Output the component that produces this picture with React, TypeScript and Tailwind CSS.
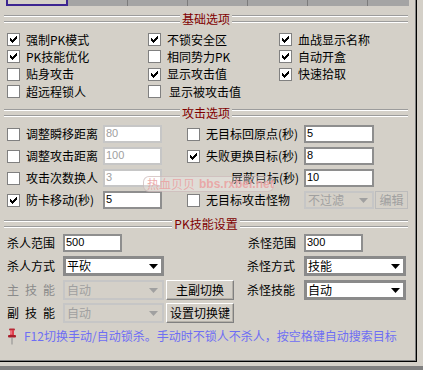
import React from "react";

function Check({ checked }: { checked?: boolean }) {
  return (
    <span className="flex h-[13px] w-[13px] shrink-0 border border-[#808080] bg-white">
      {checked && (
        <svg width="11" height="11" viewBox="0 0 11 11" shapeRendering="crispEdges" className="block">
          <rect x="2" y="4" width="1" height="3" fill="#000" />
          <rect x="3" y="5" width="1" height="3" fill="#000" />
          <rect x="4" y="6" width="1" height="3" fill="#000" />
          <rect x="5" y="5" width="1" height="3" fill="#000" />
          <rect x="6" y="4" width="1" height="3" fill="#000" />
          <rect x="7" y="3" width="1" height="3" fill="#000" />
          <rect x="8" y="2" width="1" height="3" fill="#000" />
        </svg>
      )}
    </span>
  );
}

function Etched() {
  return (
    <div className="flex flex-1 flex-col gap-[4px]">
      <div className="h-[2px] border-t border-b border-t-[#9c9c9c] border-b-white" />
      <div className="h-[2px] border-t border-b border-t-[#9c9c9c] border-b-white" />
    </div>
  );
}

function Header({ title, className = "" }: { title: string; className?: string }) {
  return (
    <div className={"ml-[4px] flex h-[18px] w-[404px] shrink-0 items-center " + className}>
      <Etched />
      <span className="px-[2px] text-[12px] leading-[14px] text-[#800000]">{title}</span>
      <Etched />
    </div>
  );
}

function Field({ value, disabled, w }: { value: string; disabled?: boolean; w: string }) {
  return (
    <div
      className={
        "h-[18px] shrink-0 border-2 bg-white pl-[1px] font-['Liberation_Sans',Arial,sans-serif] text-[11px] leading-[12px] " +
        w +
        (disabled ? " border-[#c6c6c6] text-[#a0a0a0]" : " border-[#8e8e8e] text-black")
      }
    >
      {value}
    </div>
  );
}

function Arrow({ color }: { color: string }) {
  return (
    <svg width="9" height="5" viewBox="0 0 9 5" className="block shrink-0">
      <polygon points="0,0 9,0 4.5,5" fill={color} />
    </svg>
  );
}

function Select({ value, disabled, w, h = "h-[20px]" }: { value: string; disabled?: boolean; w: string; h?: string }) {
  if (disabled) {
    return (
      <div className={"flex shrink-0 items-center justify-between border-2 border-[#c6c6c6] bg-[#d4d0c8] pl-[2px] pr-[4px] text-[#a0a0a0] " + w + " " + h}>
        <span>{value}</span>
        <Arrow color="#a0a0a0" />
      </div>
    );
  }
  return (
    <div className={"flex shrink-0 items-center justify-between border-[3px] border-[#8a8a8a] bg-white pl-[1px] pr-[3px] text-black " + w + " " + h}>
      <span>{value}</span>
      <Arrow color="#000" />
    </div>
  );
}

function Btn({ label }: { label: string }) {
  return (
    <div className="ml-[2px] flex h-[20px] w-[68px] shrink-0 items-center justify-center border border-t-white border-l-white border-r-[#808080] border-b-[#808080] bg-[#d4d0c8] shadow-[inset_-1px_-1px_0_#b4b0a8]">
      {label}
    </div>
  );
}

function Cell({ label, checked, labelClass = "" }: { label: string; checked?: boolean; labelClass?: string }) {
  return (
    <div className="flex items-center gap-[6px]">
      <Check checked={checked} />
      <span className={"whitespace-nowrap " + labelClass}>{label}</span>
    </div>
  );
}

function Spaced({ text, gray }: { text: string; gray?: boolean }) {
  return (
    <div className={"flex w-[56px] shrink-0 gap-[6px] " + (gray ? "text-[#8a8a8a]" : "text-black")}>
      {text.split("").map((c, i) => (
        <span key={i}>{c}</span>
      ))}
    </div>
  );
}

export default function App() {
  return (
    <div className="relative h-[370px] w-[423px] overflow-hidden bg-[#d4d0c8] font-['Noto_Sans_CJK_SC','Noto_Sans',sans-serif] text-[12px] leading-[14px] text-black">
      <div className="h-[362px] w-[417px] border-r border-b border-black">
        <div className="flex h-full w-full flex-col border-r border-b border-[#808080]">
          {/* tab strip */}
          <div className="flex h-[6px] shrink-0">
            <div className="w-[6px]" />
            <div className="w-[62px] border-x-2 border-b-2 border-[#3c2591]" />
            <div className="flex w-[341px] bg-[#a4a4a4]">
              <div className="w-[60px] border-r border-[#7c7c7c]" />
              <div className="w-[60px] border-r border-[#7c7c7c]" />
              <div className="w-[60px] border-r border-[#7c7c7c]" />
              <div className="w-[60px] border-r border-[#7c7c7c]" />
              <div className="w-[60px] border-r border-[#7c7c7c]" />
              <div className="flex-1" />
            </div>
          </div>

          <Header title="基础选项" className="mt-[4px]" />

          <div className="ml-[7px] mt-[3px] grid grid-cols-[141px_131px_1fr] grid-rows-[17px_17px_18px_17px]">
            <Cell label="强制PK模式" checked />
            <Cell label="不锁安全区" checked />
            <Cell label="血战显示名称" checked />
            <Cell label="PK技能优化" checked />
            <Cell label="相同势力PK" />
            <Cell label="自动开盒" checked />
            <Cell label="贴身攻击" />
            <Cell label="显示攻击值" checked />
            <Cell label="快速拾取" checked />
            <Cell label="超远程锁人" />
            <Cell label="显示被攻击值" labelClass="ml-[2px]" />
            <div />
          </div>

          <Header title="攻击选项" className="mt-[4px]" />

          <div className="mt-[1px] flex flex-col">
            <div className="flex h-[22px] items-center pl-[7px]">
              <Check />
              <span className="ml-[6px] w-[77px] whitespace-nowrap">调整瞬移距离</span>
              <Field value="80" disabled w="w-[59px]" />
              <div className="ml-[25px]"><Check /></div>
              <span className="ml-[6px] w-[98px] whitespace-nowrap">无目标回原点(秒)</span>
              <Field value="5" w="w-[70px]" />
            </div>
            <div className="flex h-[22px] items-center pl-[7px]">
              <Check />
              <span className="ml-[6px] w-[77px] whitespace-nowrap">调整攻击距离</span>
              <Field value="100" disabled w="w-[59px]" />
              <div className="ml-[25px]"><Check checked /></div>
              <span className="ml-[6px] w-[98px] whitespace-nowrap">失败更换目标(秒)</span>
              <Field value="8" w="w-[70px]" />
            </div>
            <div className="flex h-[22px] items-center pl-[7px]">
              <Check />
              <span className="ml-[6px] w-[77px] whitespace-nowrap">攻击次数换人</span>
              <Field value="3" disabled w="w-[59px]" />
              <div className="ml-[25px] w-[13px]" />
              <span className="ml-[6px] w-[98px] whitespace-nowrap pr-[5px] text-right">屏蔽目标(秒)</span>
              <Field value="10" w="w-[70px]" />
            </div>
            <div className="flex h-[22px] items-center pl-[7px]">
              <Check checked />
              <span className="ml-[6px] w-[77px] whitespace-nowrap">防卡移动(秒)</span>
              <Field value="5" w="w-[59px]" />
              <div className="ml-[25px]"><Check /></div>
              <span className="ml-[6px] w-[98px] whitespace-nowrap">无目标攻击怪物</span>
              <Select value="不过滤" disabled w="w-[70px]" h="h-[18px]" />
              <div className="ml-[1px] flex h-[18px] w-[33px] items-center justify-center border border-[#bcbcbc] text-[#a0a0a0]">
                编辑
              </div>
            </div>
          </div>

          <Header title="PK技能设置" className="mt-[4px]" />

          <div className="flex h-[19px] items-center pl-[7px]">
            <span className="w-[56px] shrink-0">杀人范围</span>
            <Field value="500" w="w-[59px]" />
            <span className="ml-[118px] w-[64px] shrink-0 pr-[8px] text-right">杀怪范围</span>
            <Field value="300" w="w-[59px]" />
          </div>
          <div className="mt-[4px] flex h-[20px] items-center pl-[7px]">
            <span className="w-[56px] shrink-0">杀人方式</span>
            <Select value="平砍" w="w-[101px]" />
            <span className="ml-[76px] w-[64px] shrink-0 pr-[9px] text-right">杀怪方式</span>
            <Select value="技能" w="w-[102px]" />
          </div>
          <div className="mt-[4px] flex h-[20px] items-center pl-[7px]">
            <Spaced text="主技能" gray />
            <Select value="自动" disabled w="w-[101px]" />
            <Btn label="主副切换" />
            <span className="ml-[6px] w-[64px] shrink-0 pr-[9px] text-right">杀怪技能</span>
            <Select value="自动" w="w-[102px]" />
          </div>
          <div className="mt-[3px] flex h-[20px] items-center pl-[7px]">
            <Spaced text="副技能" />
            <Select value="自动" disabled w="w-[101px]" />
            <Btn label="设置切换键" />
          </div>
          <div className="mt-[4px] flex h-[18px] items-center pl-[7px]">
            <svg width="10" height="17" viewBox="0 0 10 17" className="block shrink-0">
              <rect x="2" y="0.5" width="6" height="2" rx="1" fill="#b82a36" />
              <rect x="3" y="2" width="4" height="5" fill="#e0404e" />
              <rect x="3.5" y="2.5" width="1" height="4" fill="#f4a0a8" />
              <rect x="1" y="7" width="8" height="2.5" rx="1" fill="#a81e2a" />
              <rect x="4.5" y="9.5" width="1" height="7" fill="#8c8c8c" />
            </svg>
            <span className="ml-[7px] whitespace-nowrap text-[#6e6ef4]">
              F12切换手动/自动锁杀。手动时不锁人不杀人，按空格键自动搜索目标
            </span>
          </div>
        </div>
      </div>
      <div className="mt-[4px] h-[4px] w-full bg-[#808080]" />

      {/* watermark */}
      <div className="absolute left-[143px] top-[176px] flex h-[16px] w-[131px] items-center gap-[4px] whitespace-nowrap rounded-[6px] border border-[#c9b5b5]/70 bg-white/25 pl-[3px] text-[12px] leading-[14px] text-[#eaa2a2]/90">
        <span className="shrink-0 whitespace-nowrap">热血贝贝</span>
        <span className="shrink-0 whitespace-nowrap font-['Liberation_Sans',Arial,sans-serif] font-bold">bbs.rxbei.net</span>
      </div>
    </div>
  );
}
